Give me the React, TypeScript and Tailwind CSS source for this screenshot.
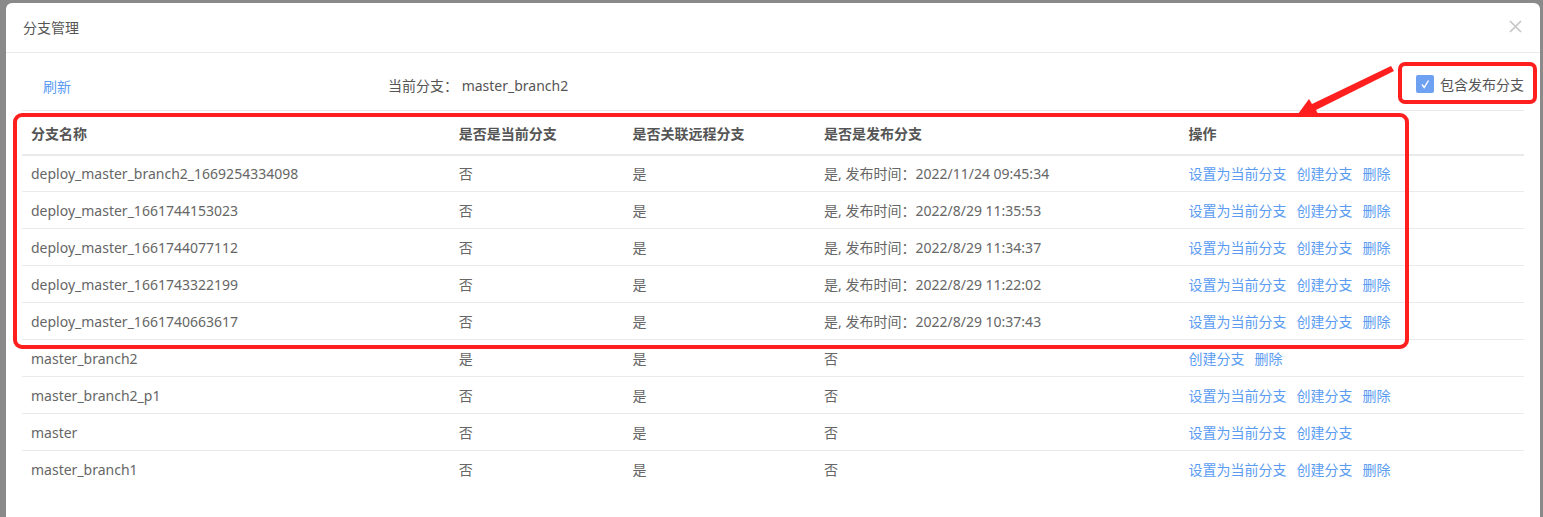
import React from 'react';

type Row = {
  name: string;
  current: string;
  remote: string;
  release: string;
  actions: string[];
};

const rows: Row[] = [
  { name: 'deploy_master_branch2_1669254334098', current: '否', remote: '是', release: '是, 发布时间：2022/11/24 09:45:34', actions: ['设置为当前分支', '创建分支', '删除'] },
  { name: 'deploy_master_1661744153023', current: '否', remote: '是', release: '是, 发布时间：2022/8/29 11:35:53', actions: ['设置为当前分支', '创建分支', '删除'] },
  { name: 'deploy_master_1661744077112', current: '否', remote: '是', release: '是, 发布时间：2022/8/29 11:34:37', actions: ['设置为当前分支', '创建分支', '删除'] },
  { name: 'deploy_master_1661743322199', current: '否', remote: '是', release: '是, 发布时间：2022/8/29 11:22:02', actions: ['设置为当前分支', '创建分支', '删除'] },
  { name: 'deploy_master_1661740663617', current: '否', remote: '是', release: '是, 发布时间：2022/8/29 10:37:43', actions: ['设置为当前分支', '创建分支', '删除'] },
  { name: 'master_branch2', current: '是', remote: '是', release: '否', actions: ['创建分支', '删除'] },
  { name: 'master_branch2_p1', current: '否', remote: '是', release: '否', actions: ['设置为当前分支', '创建分支', '删除'] },
  { name: 'master', current: '否', remote: '是', release: '否', actions: ['设置为当前分支', '创建分支'] },
  { name: 'master_branch1', current: '否', remote: '是', release: '否', actions: ['设置为当前分支', '创建分支', '删除'] },
];

const headers = ['分支名称', '是否是当前分支', '是否关联远程分支', '是否是发布分支', '操作'];
const widths = ['w-[428px]', 'w-[174px]', 'w-[192px]', 'w-[365px]', 'w-[345px]'];

export default function App() {
  return (
    <div className="relative h-[517px] w-[1543px] overflow-hidden bg-[#8a8a8a] font-['Noto_Sans','Noto_Sans_CJK_SC',sans-serif] text-[14px] text-[#666]">
      <div className="ml-[6px] mt-[3px] h-[540px] w-[1534px] rounded-md bg-white">
        {/* header */}
        <div className="flex h-[50px] items-center justify-between border-b border-[#e8eaec] pl-[17px] pr-[18px]">
          <span className="text-[14px] text-[#555]">分支管理</span>
          <svg width="13" height="13" viewBox="0 0 13 13" className="mt-[-2px]">
            <path d="M1 1L12 12M12 1L1 12" stroke="#c4c4c4" strokeWidth="1.6" />
          </svg>
        </div>

        {/* body */}
        <div className="px-[16px]">
          <div className="flex h-[57px] items-center">
            <span className="ml-[21px] w-[345px] pt-[10px] text-[#5b9cf2]">刷新</span>
            <span className="pt-[8px] text-[#555]">当前分支： master_branch2</span>
            <label className="ml-auto flex items-center gap-[6px] pt-[5px] text-[#555]">
              <span className="flex h-[18px] w-[18px] items-center justify-center rounded-[2px] bg-[#6ea1f2]">
                <svg width="12" height="12" viewBox="0 0 12 12">
                  <path d="M3 6.5L5.2 9.5L9.5 2.5" fill="none" stroke="#fff" strokeWidth="1.4" />
                </svg>
              </span>
              包含发布分支
            </label>
          </div>

          <table className="table-fixed border-collapse border-t border-[#e8eaec]">
            <thead>
              <tr className="h-[44px] border-b-2 border-[#e8eaec]">
                {headers.map((h, i) => (
                  <th key={h} className={`${widths[i]} px-[9px] pt-[3px] text-left font-bold text-[#555]`}>
                    {h}
                  </th>
                ))}
              </tr>
            </thead>
            <tbody>
              {rows.map((r) => (
                <tr key={r.name} className="h-[37px] border-b border-[#e8eaec] last:border-b-0">
                  <td className="px-[9px] pt-[1px]">{r.name}</td>
                  <td className="px-[9px] pt-[1px]">{r.current}</td>
                  <td className="px-[9px] pt-[1px]">{r.remote}</td>
                  <td className="px-[9px] pt-[1px]">{r.release}</td>
                  <td className="px-[9px] pt-[1px]">
                    <div className="flex gap-[10px] text-[#5b9cf2]">
                      {r.actions.map((a) => (
                        <span key={a}>{a}</span>
                      ))}
                    </div>
                  </td>
                </tr>
              ))}
            </tbody>
          </table>
        </div>
      </div>

      {/* red annotations */}
      <div className="pointer-events-none absolute left-[13px] top-[113px] h-[236px] w-[1396px] rounded-[9px] border-[4px] border-[#ff1f1f]" />
      <div className="pointer-events-none absolute left-[1398px] top-[62px] h-[42px] w-[139px] rounded-[7px] border-[4px] border-[#ff1f1f]" />
      <svg className="pointer-events-none absolute left-0 top-0" width="1543" height="517">
        <polygon points="1298,114 1309,99 1312,104 1391,66 1394,71 1316,110 1318,114" fill="#ff1f1f" />
      </svg>
    </div>
  );
}
